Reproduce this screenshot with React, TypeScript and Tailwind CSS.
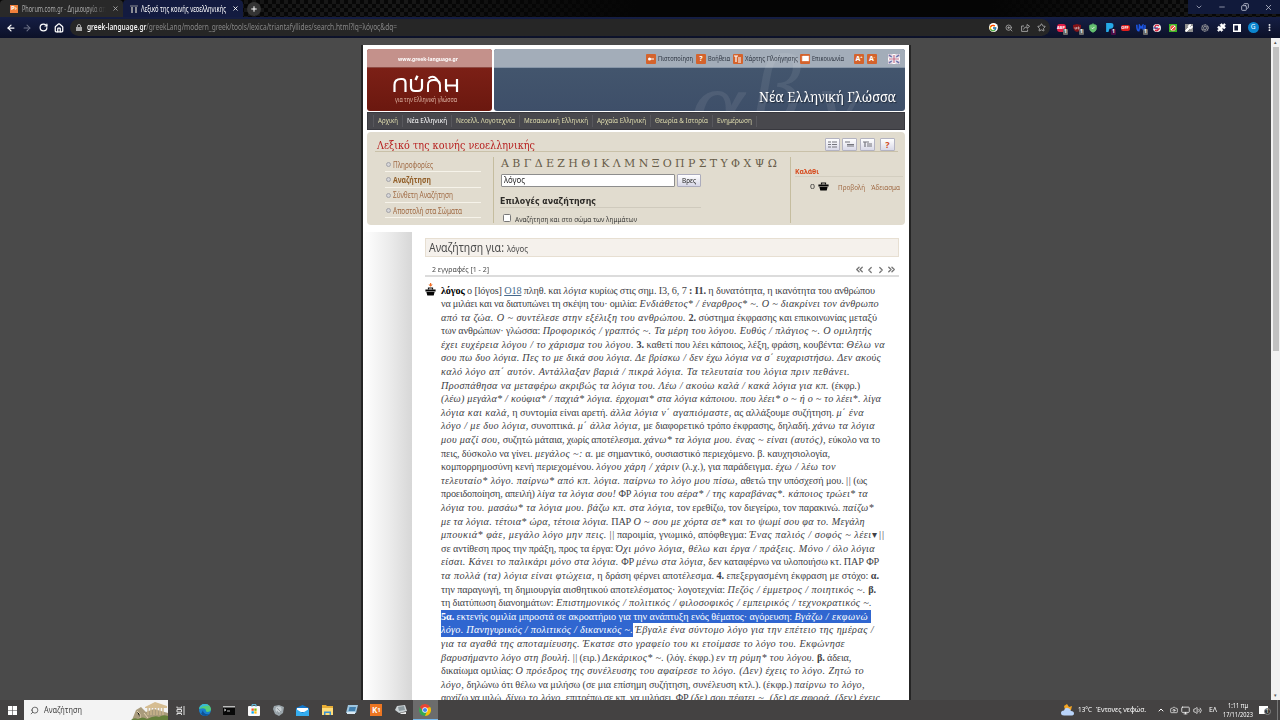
import { useLayoutEffect, useRef, type ReactNode } from "react";
import {
  ArrowLeft, ArrowRight, RotateCw, House, Lock, ZoomIn, Share, Star, X, Plus, Minus, ChevronDown, ChevronUp,
  ChevronLeft, ChevronRight, ChevronsLeft, ChevronsRight, Copy, Puzzle, EllipsisVertical, Mail, Volume2, Monitor,
  Search, Wrench, Aperture, Camera, ShieldCheck,
} from "lucide-react";
import { FcGoogle } from "react-icons/fc";

/* Text run set to an exact measure: prose by letter spacing, labels by condensing the face. */
function T({ w, c = "", prose = false, children }: { w: number; c?: string; prose?: boolean; children: ReactNode }) {
  const r = useRef<HTMLSpanElement>(null);
  useLayoutEffect(() => {
    const el = r.current!;
    el.style.setProperty("--ls", "0px");
    el.style.setProperty("--sx", "1");
    const n = el.getBoundingClientRect().width;
    if (prose) el.style.setProperty("--ls", `${(w - n) / (el.textContent || " ").length}px`);
    else el.style.setProperty("--sx", `${w / n}`);
  }, [w, prose]);
  return (
    <span className={"block shrink-0 whitespace-pre " + c} style={{ width: w }}>
      <span ref={r} className={prose ? "inline-block tracking-[var(--ls)]" : "inline-block origin-left [transform:scaleX(var(--sx))]"}>{children}</span>
    </span>
  );
}

/* _text_ is italic, *text* is bold; asterisks that belong to the entry are written as ∗ */
function rich(s: string) {
  return s.split(/(_[^_]+_|\*[^*]+\*)/).map((p, i) => {
    const t = p.replace(/∗/g, "*").replace("||", "|\u200a|");
    if (p[0] === "_") return <em key={i} className="tracking-[calc(var(--ls)+0.5px)]">{t.slice(1, -1)}</em>;
    if (p[0] === "*") return <b key={i}>{p.slice(1, -1)}</b>;
    return t;
  });
}

const after: [number, string][] = [
  [438, "να μιλάει και να διατυπώνει τη σκέψη του· ομιλία: _Ενδιάθετος∗ / έναρθρος∗ ~. Ο ~ διακρίνει τον άνθρωπο_"],
  [436, "_από τα ζώα. Ο ~ συντέλεσε στην εξέλιξη του ανθρώπου._ *2.* σύστημα έκφρασης και επικοινωνίας μεταξύ"],
  [431, "των ανθρώπων· γλώσσα: _Προφορικός / γραπτός ~. Τα μέρη του λόγου. Ευθύς / πλάγιος ~. Ο ομιλητής_"],
  [444, "_έχει ευχέρεια λόγου / το χάρισμα του λόγου._ *3.* καθετί που λέει κάποιος, λέξη, φράση, κουβέντα: _Θέλω να_"],
  [440, "_σου πω δυο λόγια. Πες το με δικά σου λόγια. Δε βρίσκω / δεν έχω λόγια να σ΄ ευχαριστήσω. Δεν ακούς_"],
  [409, "_καλό λόγο απ΄ αυτόν. Αντάλλαξαν βαριά / πικρά λόγια. Τα τελευταία του λόγια πριν πεθάνει._"],
  [419, "_Προσπάθησα να μεταφέρω ακριβώς τα λόγια του. Λέω / ακούω καλά / κακά λόγια για κπ._ (έκφρ.)"],
  [440, "_(λέω) μεγάλα∗ / κούφια∗ / παχιά∗ λόγια. έρχομαι∗ στα λόγια κάποιου. που λέει∗ ο ~ ή ο ~ το λέει∗. λίγα_"],
  [423, "_λόγια και καλά,_ η συντομία είναι αρετή. _άλλα λόγια ν΄ αγαπιόμαστε,_ ας αλλάξουμε συζήτηση. _μ΄ ένα_"],
  [434, "_λόγο / με δυο λόγια,_ συνοπτικά. _μ΄ άλλα λόγια,_ με διαφορετικό τρόπο έκφρασης, δηλαδή. _χάνω τα λόγια_"],
  [439, "_μου μαζί σου,_ συζητώ μάταια, χωρίς αποτέλεσμα. _χάνω∗ τα λόγια μου. ένας ~ είναι (αυτός),_ εύκολο να το"],
  [389, "πεις, δύσκολο να γίνει. _μεγάλος ~:_ α. με σημαντικό, ουσιαστικό περιεχόμενο. β. καυχησιολογία,"],
  [395, "κομπορρημοσύνη κενή περιεχομένου. _λόγου χάρη / χάριν_ (λ.χ.), για παράδειγμα. _έχω / λέω τον_"],
  [426, "_τελευταίο∗ λόγο. παίρνω∗ από κπ. λόγια. παίρνω το λόγο μου πίσω,_ αθετώ την υπόσχεσή μου. || (ως"],
  [427, "προειδοποίηση, απειλή) _λίγα τα λόγια σου!_ ΦΡ _λόγια του αέρα∗ / της καραβάνας∗. κάποιος τρώει∗ τα_"],
  [433, "_λόγια του. μασάω∗ τα λόγια μου. βάζω κπ. στα λόγια,_ τον ερεθίζω, τον διεγείρω, τον παρακινώ. _παίζω∗_"],
  [424, "_με τα λόγια. τέτοια∗ ώρα, τέτοια λόγια._ ΠΑΡ _Ο ~ σου με χόρτα σε∗ και το ψωμί σου φα το. Μεγάλη_"],
  [443, "_μπουκιά∗ φάε, μεγάλο λόγο μην πεις._ || παροιμία, γνωμικό, απόφθεγμα: _Ένας παλιός / σοφός ~ λέει_▾ ||"],
  [434, "σε αντίθεση προς την πράξη, προς τα έργα: _Όχι μόνο λόγια, θέλω και έργα / πράξεις. Μόνο / όλο λόγια_"],
  [438, "_είσαι. Κάνει το παλικάρι μόνο στα λόγια._ ΦΡ _μένω στα λόγια,_ δεν καταφέρνω να υλοποιήσω κτ. ΠΑΡ ΦΡ"],
  [438, "_τα πολλά (τα) λόγια είναι φτώχεια,_ η δράση φέρνει αποτέλεσμα. *4.* επεξεργασμένη έκφραση με στόχο: *α.*"],
  [435, "την παραγωγή, τη δημιουργία αισθητικού αποτελέσματος· λογοτεχνία: _Πεζός / έμμετρος / ποιητικός ~._ *β.*"],
  [431, "τη διατύπωση διανοημάτων: _Επιστημονικός / πολιτικός / φιλοσοφικός / εμπειρικός / τεχνοκρατικός ~._"],
];
const tail: [number, string][] = [
  [404, "_για τα αγαθά της αποταμίευσης. Έκατσε στο γραφείο του κι ετοίμασε το λόγο του. Εκφώνησε_"],
  [410, "_βαρυσήμαντο λόγο στη βουλή._ || (ειρ.) _Δεκάρικος∗ ~._ (λόγ. έκφρ.) _εν τη ρύμη∗ του λόγου._ *β.* άδεια,"],
  [423, "δικαίωμα ομιλίας: _Ο πρόεδρος της συνέλευσης του αφαίρεσε το λόγο. (Δεν) έχεις το λόγο. Ζητώ το_"],
  [424, "_λόγο,_ δηλώνω ότι θέλω να μιλήσω (σε μια επίσημη συζήτηση, συνέλευση κτλ.). (έκφρ.) _παίρνω το λόγο,_"],
  [439, "αρχίζω να μιλώ. _δίνω το λόγο,_ επιτρέπω σε κπ. να μιλήσει. ΦΡ _(δε) σου πέφτει ~, (δε) σε αφορά. (δεν) έχεις_"],
];
const L = "h-[13.6px] leading-[13.6px]";

function Basket({ arrow = false }: { arrow?: boolean }) {
  return (
    <svg viewBox="0 0 11 13" className="h-[13px] w-[11px] shrink-0">
      {arrow && <path d="M5 0h1.200v1.600h1.600L5.600 3.800 3.400 1.600H5z" fill="#f06a20" />}
      <path d="M3.500 6.500V5h4v1.500" fill="none" stroke="#111" strokeWidth="1.200" />
      <path d="M.4 6.500h10.200v2H.4z M1.400 8.900h8.200l-.9 3.600H2.300z" fill="#050505" />
    </svg>
  );
}

function Orange({ children }: { children: ReactNode }) {
  return <span className="flex size-[10px] shrink-0 items-center justify-center rounded-[1px] bg-[#d4632c] text-[7px] font-bold leading-none text-white">{children}</span>;
}

function Cell({ children }: { children: ReactNode }) {
  return <span className="relative flex w-4 shrink-0 items-center justify-center">{children}</span>;
}
function Count({ c = "bg-[#6b6b6b]" }: { c?: string }) {
  return <span className={"absolute left-[10px] top-[6px] flex h-[6px] w-[5px] items-center justify-center rounded-[1px] text-[5px] font-bold leading-none text-white " + c}>1</span>;
}

function Browser() {
  return (
    <header className="text-[8px] text-white">
      <div className="flex h-[17px] bg-[#0a0a0a] bg-[repeating-conic-gradient(#171717_0_25%,#070707_0_50%)] bg-[length:8px_8px]">
        <div className="flex h-full w-[123px] items-center rounded-t-[4px] bg-[#292929] pl-[10px] text-[#a9a9a9]">
          <span className="flex size-[8px] items-center justify-center bg-[#f0803c] text-[6px] font-bold text-white">P›</span>
          <T w={84} c="ml-[4px] text-[8px] [mask-image:linear-gradient(90deg,#000_80%,transparent)]">Phorum.com.gr - Δημιουργία απ</T>
          <X className="ml-[6px] size-[7px]" strokeWidth={3} />
        </div>
        <div className="flex h-full w-[120px] items-center rounded-t-[4px] bg-[#131b40] pl-[7px]">
          <svg viewBox="0 0 8 8" className="size-[8px]"><path d="M0 .5h8v1H0zM1 2h2v6H1zM5 2h2v6H5z" fill="#8b8d94" /></svg>
          <T w={85} c="ml-[3px] text-[8px]">Λεξικό της κοινής νεοελληνικής</T>
          <X className="ml-[6px] size-[7px]" strokeWidth={3} />
        </div>
        <span className="ml-[4px] mt-[2px] flex size-[14px] items-center justify-center rounded-full bg-[#343434]"><Plus className="size-[8px]" strokeWidth={3} /></span>
        <div className="w-[140px] bg-transparent" />
        <div className="flex-1 bg-[linear-gradient(90deg,transparent,#050505_30%,#050505_75%,transparent)]" />
        <div className="flex h-[14px] w-[92px] items-center justify-around bg-[#111a3b] text-[#c5c9d8]">
          <ChevronDown className="size-[8px]" /><Minus className="size-[8px]" /><Copy className="size-[8px] -scale-x-100" strokeWidth={2.5} /><X className="size-[9px]" />
        </div>
      </div>
      <div className="flex h-[21px] items-center bg-[#11183a] bg-[linear-gradient(#151e44,#0c1128)] pl-[3px]">
        <Cell><ArrowLeft className="size-[10px]" strokeWidth={3} /></Cell>
        <Cell><ArrowRight className="size-[10px] text-[#6f7489]" strokeWidth={2.5} /></Cell>
        <Cell><RotateCw className="size-[9px]" strokeWidth={3.3} /></Cell>
        <Cell><House className="size-[10px]" strokeWidth={3} /></Cell>
        <div className="ml-[3px] flex h-[17px] w-[980px] items-center rounded-full bg-[#262626] pl-[6px] pr-px">
          <svg viewBox="0 0 6 7" className="h-[7px] w-[6px]"><path d="M0 3h6v4H0z" fill="#aaa" /><path d="M1.400 3V2a1.600 1.500 0 0 1 3.200 0v1" fill="none" stroke="#aaa" /></svg>
          <T w={310} c="ml-[5px] text-[8.2px] text-[#868686]"><b className="font-semibold text-[#eee]">greek-language.gr</b>/greekLang/modern_greek/tools/lexica/triantafyllides/search.html?lq=λόγος&dq=</T>
          <div className="ml-auto flex text-[#a8a8a8]">
            <Cell><span className="flex size-[9px] items-center justify-center rounded-full bg-white"><FcGoogle className="size-[8px]" /></span></Cell>
            <Cell><ZoomIn className="size-[8px]" strokeWidth={2.5} /></Cell>
            <Cell><svg viewBox="0 0 9 8" className="h-[8px] w-[9px]" fill="none" stroke="#a8a8a8" strokeWidth=".9"><path d="M3 2H.6v5.400h6V5.500M2.500 5.500Q3 3 6 2.800V4.500L8.600 2.300 6 .5v1.400" /></svg></Cell>
            <Cell><Star className="size-[9px]" strokeWidth={2.5} /></Cell>
          </div>
        </div>
        <div className="ml-[3px] flex h-[10px]">
          <Cell><span className="h-[8px] w-[9px] rounded-[3px] bg-[#e21d45] text-center text-[4px] font-bold leading-[8px]">ABP</span><Count /></Cell>
          <Cell><svg viewBox="0 0 8 8" className="size-[8px]"><path d="M4 0l4 1v3Q7 7 4 8 1 7 0 4V1z" fill="#831318" /><path d="M2 3v2h1.500V3M5 3h1v2H5z" stroke="#ddd" strokeWidth=".6" fill="none" /></svg><Count /></Cell>
          <Cell><ShieldCheck className="size-[10px] fill-[#63bf70] text-[#63bf70] [&>path:last-child]:stroke-white" /></Cell>
          <Cell><svg viewBox="0 0 8 8" className="size-[9px]"><path d="M1 0h4q3 0 2.500 3Q7 5 5 5H4L3 8H1z" fill="#25a9e8" /></svg><Count c="bg-[#4c0c46]" /></Cell>
          <Cell><span className="h-[6px] w-[9px] rounded-[2px] bg-[#dd1c1c] text-center text-[4px] font-bold leading-[6px]">OFF</span></Cell>
          <Cell><svg viewBox="0 0 10 8" className="h-[8px] w-[10px]"><path d="M.8.8q0 6 2 6Q3.500 4 3.500 1.500L5 4l1.800-2.500Q6.500 5 8 7q1.500-2 .8-6" fill="none" stroke="#1d56e3" strokeWidth="1.600" /></svg><Count /></Cell>
          <Cell><svg viewBox="0 0 8 8" className="size-[8px]"><circle cx="4" cy="4" r="4" fill="#eee" /><path d="M6 2Q3 0 2 2.500T6 5Q4 8 2 6" stroke="#d51f3a" strokeWidth="1.300" fill="none" /><path d="M0 4h5" stroke="#2553b4" /></svg></Cell>
          <Cell><svg viewBox="0 0 8 8" className="size-[8px]"><path d="M0 0h8v8H0z" fill="#39b420" /><circle cx="4" cy="4" r="2.800" fill="#f05340" stroke="#dfd0c0" strokeWidth=".6" /><path d="M2 6l4-4" stroke="#fff" /></svg></Cell>
          <Cell><span className="flex size-[8px] bg-[#8f8f8f]"><Wrench className="size-[8px] fill-white text-white" strokeWidth={3} /></span></Cell>
          <Cell><Aperture className="size-[8px] text-[#a5a5a5]" /></Cell>
          <Cell><Puzzle className="size-[9px] fill-white" /></Cell>
          <Cell><svg viewBox="0 0 8 8" className="size-[8px]"><path d="M.7.7h6.600v6.600H.7z" fill="none" stroke="#fff" strokeWidth="1.400" /><path d="M5 0h3v8H5z" fill="#fff" /></svg></Cell>
          <Cell><span className="flex size-[11px] shrink-0 items-center justify-center rounded-full bg-[#0b85cf] text-[6.5px] leading-none">G</span></Cell>
          <Cell><EllipsisVertical className="size-[9px]" strokeWidth={3} /></Cell>
        </div>
      </div>
    </header>
  );
}

const nav: [string, number][] = [
  ["Αρχική", 20], ["Νέα Ελληνική", 40], ["Νεοελλ. Λογοτεχνία", 59], ["Μεσαιωνική Ελληνική", 64], ["Αρχαία Ελληνική", 49], ["Θεωρία & Ιστορία", 53], ["Ενημέρωση", 35],
];
const side: [string, number][] = [["Πληροφορίες", 40], ["Αναζήτηση", 38], ["Σύνθετη Αναζήτηση", 60], ["Αποστολή στα Σώματα", 69]];

function Banner() {
  return (
    <div className="flex h-[62px] gap-[2px]">
      <div className="flex w-[125px] flex-col items-center overflow-hidden rounded-[3px] bg-[linear-gradient(#832319,#6b180f)] text-white">
        <div className="flex h-[19px] w-full items-center justify-center border-b border-[#8e4a43] bg-[#c4918b] pr-[4px] pt-[3px]"><T w={60} c="text-[6px] font-bold">www.greek-language.gr</T></div>
        <svg viewBox="0 0 66 19" className="mr-[7px] mt-[7px] h-[19px] w-[66px]" fill="none" stroke="#fff" strokeWidth="2.200">
          <path d="M1.500 17V10Q1.500 4 8 4h1Q12.500 4 12.500 8v9M18 4v8q0 4 4 4h3q4 0 4-4V4" />
          <path d="M35 17V10Q35 5 41 5q6 0 6 5v7M35.500 3.500Q38 1 41 2t6 8" strokeWidth="1.900" />
          <path d="M53 4v9q0 3 2 3M53.500 10.500H64M64 4v13" /><path d="M22.500 5L24.500.8" strokeWidth="2.500" />
        </svg>
        <T w={62} c="mr-[7px] mt-px text-[7px] leading-[9px] text-[#dfb8a8]">για την Ελληνική γλώσσα</T>
      </div>
      <div className="relative flex w-[411px] flex-col overflow-hidden rounded-[3px] bg-[linear-gradient(#45586f,#3e4f69)]">
        <div className="flex h-[19px] items-center border-b border-[#8796a8] bg-[#a3adb9] pl-[152px] pt-px text-[7.5px] text-[#2d3440]">
          <Orange><svg viewBox="0 0 8 8" className="size-[8px]"><circle cx="2.500" cy="4" r="1.500" fill="#fff" /><path d="M3 4h4" stroke="#fff" /></svg></Orange>
          <T w={35} c="ml-[2px]">Πιστοποίηση</T>
          <span className="w-[3px]" /><Orange>?</Orange><T w={22} c="ml-[2px]">Βοήθεια</T>
          <span className="w-[3px]" /><Orange><svg viewBox="0 0 8 8" className="size-[8px]"><path d="M0 1h4M2 1v6M4 3h3M4 5h3M4 7h3" stroke="#fff" strokeWidth="1.200" /></svg></Orange>
          <T w={53} c="ml-[2px]">Χάρτης Πλοήγησης</T>
          <span className="w-[2px]" /><Orange><Mail className="size-[9px] fill-white text-[#d4632c]" /></Orange><T w={32} c="ml-[2px]">Επικοινωνία</T>
          <span className="w-[10px]" /><Orange>A<sup className="text-[4px]">+</sup></Orange><span className="w-[3px]" /><Orange>A<sup className="text-[4px]">-</sup></Orange>
          <svg viewBox="0 0 12 10" className="ml-[11px] h-[10px] w-[12px]"><path d="M0 0h12v10H0z" fill="#dccfda" /><path d="M1 1l10 8M11 1L1 9" stroke="#6870ac" strokeWidth="1.500" /><path d="M6 0v10M0 5h12" stroke="#fff" strokeWidth="3" /><path d="M6 1v8M1 5h10" stroke="#c06a86" strokeWidth="1.200" /></svg>
        </div>
        <div className="pointer-events-none absolute inset-0 font-['Liberation_Serif'] italic leading-none text-white/[0.08]">
          <span className="absolute left-[196px] top-[4px] text-[104px]">α</span>
          <span className="absolute left-[259px] top-[-9px] text-[96px]">β</span>
          <span className="absolute left-[326px] top-[6px] text-[96px]">γ</span>
        </div>
        <T w={137} c="ml-[265px] mt-[18px] font-['Noto_Serif','Liberation_Serif',serif] text-[14.5px] leading-[20px] text-white [text-shadow:1px_1px_1px_#222c3c]">Νέα Ελληνική Γλώσσα</T>
      </div>
    </div>
  );
}

function Tool({ children }: { children: ReactNode }) {
  return <span className="flex h-[13px] w-[15px] items-center justify-center rounded-[1px] border border-[#b3b3c2] bg-[linear-gradient(#fff,#d9d9e8)] text-[9px] font-bold text-[#d14a1a]">{children}</span>;
}

function SearchPanel() {
  return (
    <section className="mt-[2px] flex h-[93px] flex-col rounded-[4px] bg-[#e1dccf]">
      <div className="ml-[8px] flex h-[20px] w-[523px] items-end border-b border-[#c9c1a9] pl-[2px]">
        <T w={158} c="-mb-px font-['DejaVu_Serif'] text-[10.5px] leading-[13px] text-[#b7201f]">Λεξικό της κοινής νεοελληνικής</T>
        <div className="ml-auto mr-[3px] flex gap-[2.500px]">
          {["M0 1h3M4 1h5M0 3.500h3M4 3.500h5M0 6h3M4 6h5", "M0 1h5M2 3.500h7M2 5h7", "M0 1h6M2 1v5M4 3h5M4 5h5"].map((d) => (
            <Tool key={d}><svg viewBox="0 0 9 7" className="h-[7px] w-[9px]"><path d={d} stroke="#75757d" strokeWidth="1.200" fill="none" /></svg></Tool>
          ))}
          <span className="ml-[3px]"><Tool>?</Tool></span>
        </div>
      </div>
      <div className="flex h-[73px] pt-[5px]">
        <div className="ml-[18px] w-[96px]">
          {side.map(([t, w], i) => (
            <div key={t} className={"flex h-[15.3px] items-center border-b border-[#f6f3ea] pt-px text-[8px] " + (i === 1 ? "font-bold text-[#93602a]" : "text-[#a06b45]")}>
              <span className="ml-[1px] mr-[2px] size-[5px] rounded-full border border-[#a3a3a9] bg-[#d5d5d8]" />
              <T w={w}>{t}</T>
            </div>
          ))}
        </div>
        <div className="ml-[12px] h-[66px] w-[298px] border-x border-[#c5bd9f] pl-[7px]">
          <div className="-mt-px flex h-[15px] w-[276px] items-center justify-between font-['DejaVu_Serif'] text-[11px] leading-none text-[#685d49]">
            {[..."ΑΒΓΔΕΖΗΘΙΚΛΜΝΞΟΠΡΣΤΥΦΧΨΩ"].map((c) => <span key={c}>{c}</span>)}
          </div>
          <div className="mt-[3px] flex">
            <div className="flex h-[13px] w-[174px] items-center rounded-[1px] border border-[#8d8d8d] bg-white pl-[2px] text-[8.5px] text-[#222]"><T w={21}>λόγος</T></div>
            <div className="ml-[2px] flex h-[13px] w-[24px] items-center justify-center rounded-[1px] border border-[#acacbc] bg-[linear-gradient(#fff,#d7d7e7)] text-[7.5px] text-[#222]"><T w={14}>Βρες</T></div>
          </div>
          <div className="-ml-px flex h-[21px] w-[201px] items-end border-b border-[#cfcabd]"><T w={96} c="font-['DejaVu_Sans'] text-[8.5px] font-bold leading-[11px] text-[#2e2c29]">Επιλογές αναζήτησης</T></div>
          <div className="mt-[3px] flex items-center pl-[2px]">
            <span className="size-[8px] rounded-[1.5px] border border-[#777] bg-white" />
            <T w={122} c="ml-[4px] mt-[3px] text-[7.8px] leading-[10px] text-[#3d3d3b]">Αναζήτηση και στο σώμα των λημμάτων</T>
          </div>
        </div>
        <div className="ml-[4px] w-[108px]">
          <div className="flex h-[20px] items-end border-b border-[#d3cec0]"><T w={24} c="text-[7.5px] font-bold leading-[10px] text-[#d64b1e]">Καλάθι</T></div>
          <div className="flex h-[19px] items-center pl-[15px] text-[7.8px] text-[#a06b45]">
            <T w={5} c="mr-[3px] text-[#333]">0</T><span className="-mt-[5px]"><Basket /></span>
            <T w={27} c="ml-[9px] mt-[2px]">Προβολή</T><T w={29} c="ml-[6px] mt-[2px]">Άδειασμα</T>
          </div>
        </div>
      </div>
    </section>
  );
}

function Entry() {
  return (
    <div className="mt-[6px] flex">
      <div className="w-[16px]"><Basket arrow /></div>
      <div className="pt-[0.5px] font-['Liberation_Serif'] text-[10.2px] text-[#414145]">
        <T prose w={434} c={L}><b className="text-black">λόγος</b> ο [lóγos] <u className="text-[#45698c]">Ο18</u> {rich("πληθ. και _λόγια_ κυρίως στις σημ. Ι3, 6, 7 *: Ι1.* η δυνατότητα, η ικανότητα του ανθρώπου")}</T>
        {after.map(([w, s]) => <T prose key={s} w={w} c={L}>{rich(s)}</T>)}
        <div className="flex h-[13.6px] w-[430px] bg-[#3066d0] text-white"><T prose w={427} c={L}>{rich("*5α.* εκτενής ομιλία μπροστά σε ακροατήριο για την ανάπτυξη ενός θέματος· αγόρευση: _Βγάζω / εκφωνώ_")}</T></div>
        <div className="flex h-[13.6px]">
          <T prose w={192} c={L + " bg-[#3066d0] text-white"}>{rich("_λόγο. Πανηγυρικός / πολιτικός / δικανικός ~._")}</T>
          <T prose w={239} c={L + " ml-[2px]"}>{rich("_Έβγαλε ένα σύντομο λόγο για την επέτειο της ημέρας /_")}</T>
        </div>
        {tail.map(([w, s]) => <T prose key={s} w={w} c={L}>{rich(s)}</T>)}
      </div>
    </div>
  );
}

function Task({ children, on = false }: { children: ReactNode; on?: boolean }) {
  return <span className={"flex h-full w-[24.5px] shrink-0 items-center justify-center " + (on ? "border-b border-[#76b9ed] bg-[#6c6c6c]" : "")}>{children}</span>;
}

function Taskbar() {
  return (
    <footer className="flex h-[20px] items-center bg-[#444242] text-white">
      <span className="flex w-[24px] justify-center"><svg viewBox="0 0 9 9" className="size-[9px]" fill="#fff"><path d="M0 0h4.200v4.200H0zM4.800 0H9v4.200H4.800zM0 4.800h4.200V9H0zM4.800 4.800H9V9H4.800z" /></svg></span>
      <div className="flex h-full w-[144px] items-center bg-[#f3f3f3] pl-[6px] text-[#444]">
        <Search className="size-[9px] -scale-x-100" /><T w={38} c="ml-[5px] text-[8.5px]">Αναζήτηση</T>
        <svg viewBox="0 0 38 18" className="ml-auto mt-[2px] h-[18px] w-[38px]">
          <path d="M2 18l4-10 5-3 5 5 8-3 14 4v7z" fill="#a99b7c" /><path d="M15 5l10-5 12 4v2H15z" fill="#d6bd91" />
          <path d="M18 6v7M21 6v7M24 6v7M27 6v7M30 6v7M33 6v7" stroke="#cbb58c" strokeWidth="1.400" /><path d="M7 9l3 3v4M14 11l4 5" stroke="#e3d3b1" /><path d="M1 18q3-3 7-1 5-3 9 0 8-4 12-2 4-3 9-1v5z" fill="#66803c" />
        </svg>
      </div>
      <Task><svg viewBox="0 0 9 9" className="size-[9px]" fill="none" stroke="#ddd"><path d="M1 .5v1.500h4.500V.5M1 3.500h4.500v2.500H1zM1 9V7.500h4.500V9M8 0v9" /></svg></Task>
      <Task><svg viewBox="0 0 12 12" className="size-[12px]"><circle cx="6" cy="6" r="6" fill="#1880d0" /><path d="M0 5Q1 0 6 0t6 5Q12 8 8 8 6 7 7 6 6 3 0 5" fill="#54cd79" /><path d="M0 5Q1 0 6 0 9 0 10 2 4 1 0 5" fill="#38b7dc" /><path d="M4 6q0 5 7 4-5 4-9 0" fill="#105296" /></svg></Task>
      <Task><svg viewBox="0 0 12 9" className="h-[9px] w-[12px]"><path d="M0 0h12v9H0z" fill="#080808" /><path d="M0 0h12v1.500H0z" fill="#bbb" /><path d="M1 3l2 1-2 1M4 5h3" stroke="#ddd" strokeWidth=".8" fill="none" /></svg></Task>
      <Task><svg viewBox="0 0 12 12" className="size-[12px]"><rect y="2" width="12" height="10" rx="1" fill="#fafafa" /><path d="M4 3V.7h4V3" fill="none" stroke="#66c9ef" /><path d="M3.500 4.500h2.300v2.300H3.500z" fill="#f35325" /><path d="M6.300 4.500h2.300v2.300H6.300z" fill="#81bc06" /><path d="M3.500 7.300h2.300v2.300H3.500z" fill="#05a6f0" /><path d="M6.300 7.300h2.300v2.300H6.300z" fill="#ffba08" /></svg></Task>
      <Task><svg viewBox="0 0 11 11" className="size-[11px]"><path d="M1 1l5-1 5 2-1 6-4 3-4-2-2-5z" fill="#9ba5ab" /><circle cx="5.500" cy="4.500" r="3" fill="#c8cfd3" /><path d="M4 3l4 4M4 6l2 3" stroke="#7b848b" strokeWidth=".7" /></svg></Task>
      <Task><svg viewBox="0 0 13 11" className="h-[11px] w-[13px]"><path d="M0 3l6.500-3L13 3v8H0z" fill="#1275c9" /><path d="M1 3h11v4H1z" fill="#fff" /><path d="M0 4l6.500 4L13 4v7H0z" fill="#35adf0" /></svg></Task>
      <Task><svg viewBox="0 0 11 10" className="h-[10px] w-[11px]"><path d="M0 0h4l1 1h6v9H0z" fill="#e8ad35" /><path d="M0 3h11v7H0z" fill="#ffdc78" /><path d="M2 10V6.500h7V10H7.500V8h-4v2z" fill="#3b91d2" /></svg></Task>
      <Task><svg viewBox="0 0 12 10" className="h-[10px] w-[12px]"><path d="M2 0h10l-2 8H0z" fill="#9ec5df" /><path d="M3.500 2h6.500L9 6H2.500z" fill="#417fae" /><path d="M1 7h8v2H1z" fill="#dbe9f3" /></svg></Task>
      <Task><span className="flex size-[12px] items-center justify-center bg-[#ee7622] text-[8px] font-bold leading-none">K<small className="text-[6px]">1</small></span></Task>
      <Task><svg viewBox="0 0 12 10" className="h-[10px] w-[12px]"><path d="M2 1l8-1 2 6-8 2-4-3z" fill="#cbd2d5" /><path d="M3 2l6-1 1 4-6 1z" fill="#8c999e" /><path d="M5 8l6-1v2H6z" fill="#eee" /></svg></Task>
      <Task on><svg viewBox="0 0 12 12" className="size-[12px]"><circle cx="6" cy="6" r="6" fill="#34a853" /><path d="M.8 3A6 6 0 0 1 11.200 3L6 6z" fill="#ea4335" /><path d="M11.200 3A6 6 0 0 1 6 12l2-5-2-4z" fill="#fbbc05" /><path d="M.8 3h10.400L6 4.500 4 7z" fill="#ea4335" /><circle cx="6" cy="6" r="2.700" fill="#fff" /><circle cx="6" cy="6" r="2.100" fill="#4285f4" /></svg></Task>
      <div className="ml-auto flex h-full w-[219px] items-center text-[7.8px]">
        <svg viewBox="0 0 13 12" className="h-[12px] w-[13px]"><path d="M6 0l2 3 3-1-1 4H4L3 2z" fill="#f5a623" /><path d="M3 11.500Q0 11.500 0 9q0-2.500 3-2.500Q4 3 7 4q2 0 3 3 3 0 3 2.500 0 2-3 2z" fill="#b9d4fa" /></svg>
        <T w={14} c="ml-[4px]">13°C</T><T w={50} c="ml-[4px]">Έντονες νεφώσ.</T>
        <ChevronUp className="ml-[11px] size-[8px]" strokeWidth={3} /><Camera className="ml-[5px] size-[8px]" /><Monitor className="ml-[3px] size-[9px]" /><Volume2 className="ml-[3px] size-[9px]" />
        <T w={8} c="ml-[7px]">ΕΛ</T>
        <div className="ml-[6px] flex w-[30px] flex-col items-center text-[7px] leading-[9px]"><T w={20}>1:11 πμ</T><T w={30}>17/11/2023</T></div>
        <span className="relative ml-[6px] h-[8px] w-[9px] bg-white"><span className="absolute left-[5px] top-[2px] flex size-[7px] items-center justify-center rounded-full border border-[#888] bg-[#333] text-[5px] leading-none">1</span></span>
        <span className="ml-[9px] h-full w-px bg-[#777]" />
      </div>
    </footer>
  );
}

export default function App() {
  return (
    <div className="flex h-[720px] w-[1280px] flex-col overflow-hidden font-['Noto_Sans','Open_Sans',sans-serif]">
      <Browser />
      <div className="flex h-[662px] bg-[#4a4a4a]">
        <main className="ml-[361px] mt-[7px] h-[655px] w-[550px] overflow-hidden border-x-2 border-[#252525] bg-white pt-[4px]">
          <div className="ml-[4px] w-[538px]">
            <Banner />
            <nav className="mt-px flex h-[18px] items-center border border-[#38383e] bg-[#48484d] pl-[5px] text-[7.7px] text-[#dfdcae]">
              {nav.map(([t, w], i) => (
                <span key={t} className={"flex border-l border-[#58585d] pl-[4px] pr-[4px] " + (i === 1 ? "text-white" : "")}><T w={w}>{t}</T></span>
              ))}
              <span className="h-[11px] border-l border-[#58585d]" />
            </nav>
            <SearchPanel />
          </div>
          <div className="mt-[7px] flex">
            <aside className="h-[470px] w-[49px] shrink-0 bg-[linear-gradient(90deg,#fff,#ededed_50%,#d7d7d7)]" />
            <section className="ml-[13px] w-[474px] pt-[6px] text-[#4b4b4b]">
              <div className="flex h-[19px] items-center border border-[#e7dfd2] bg-[#f5f1ec] pl-[3px]">
                <T w={75} c="text-[12px] leading-none">Αναζήτηση για:</T><T w={21} c="ml-[3px] mt-[2px] text-[8px] leading-none">λόγος</T>
              </div>
              <div className="flex h-[20px] items-end border-b-2 border-[#dcdcdc] pl-[7px]">
                <T w={57} c="text-[7.5px] leading-[11px]">2 εγγραφές [1 - 2]</T>
                <div className="ml-auto mr-[2px] flex items-center text-[#777]"><ChevronsLeft className="size-[11px]" strokeWidth={3} /><ChevronLeft className="size-[10px]" strokeWidth={3} /><ChevronRight className="ml-[1px] size-[10px]" strokeWidth={3} /><ChevronsRight className="size-[11px]" strokeWidth={3} /></div>
              </div>
              <Entry />
            </section>
          </div>
        </main>
        <div className="ml-auto flex w-[9px] flex-col items-center bg-[#f1f1f1] text-[5px] leading-none text-[#555]">
          <span className="flex h-[9px] items-center">▴</span><span className="h-[304px] w-[6px] bg-[#c1c1c1]" /><span className="mt-auto flex h-[9px] items-center">▾</span>
        </div>
      </div>
      <Taskbar />
    </div>
  );
}
